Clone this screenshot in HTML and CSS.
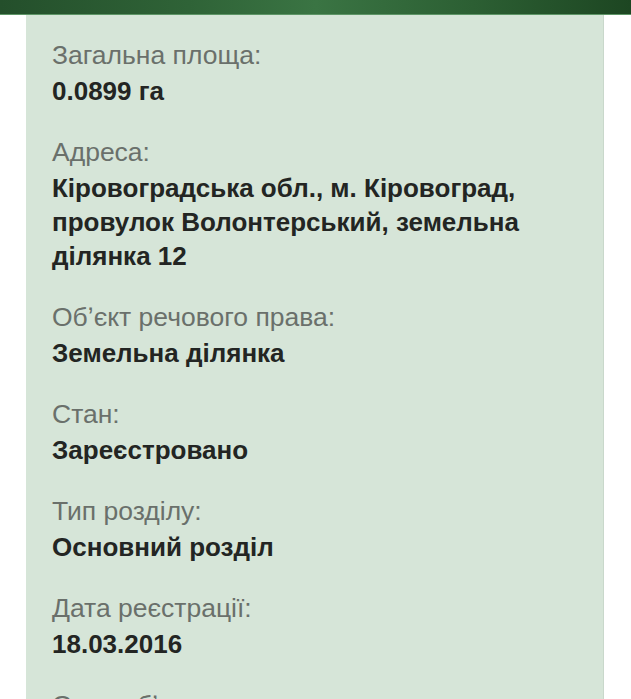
FILE: index.html
```html
<!DOCTYPE html>
<html lang="uk">
<head>
<meta charset="utf-8">
<link rel="stylesheet" href="styles.css">
</head>
<body>
<div class="topbar"></div>
<div class="card">
  <div class="field">
    <div class="label">Загальна площа:</div>
    <div class="value">0.0899 га</div>
  </div>
  <div class="field">
    <div class="label">Адреса:</div>
    <div class="value">Кіровоградська обл., м. Кіровоград, провулок Волонтерський, земельна ділянка 12</div>
  </div>
  <div class="field">
    <div class="label">Обʼєкт речового права:</div>
    <div class="value">Земельна ділянка</div>
  </div>
  <div class="field">
    <div class="label">Стан:</div>
    <div class="value">Зареєстровано</div>
  </div>
  <div class="field">
    <div class="label">Тип розділу:</div>
    <div class="value">Основний розділ</div>
  </div>
  <div class="field">
    <div class="label">Дата реєстрації:</div>
    <div class="value">18.03.2016</div>
  </div>
  <div class="field">
    <div class="label">Опис обʼєкта:</div>
  </div>
</div>
</body>
</html>
```
FILE: styles.css
```css
html, body {
  margin: 0;
  padding: 0;
  background: #ffffff;
  overflow: hidden;
}
body {
  font-family: "Liberation Sans", Arial, sans-serif;
  height: 699px;
}
.topbar {
  height: 14px;
  background: linear-gradient(90deg, #244f2b 0%, #2f6337 30%, #3a7443 50%, #2c5f33 75%, #1d4622 100%);
  border-bottom: 1px solid #5d9566;
}
.card {
  margin: 0 27px 0 26px;
  background: #d6e5d8;
  border-right: 1px solid #c9d8cb;
  padding: 25px 26px 0 26px;
  display: flex;
  flex-direction: column;
  gap: 29px;
  height: 684px;
  box-sizing: border-box;
  overflow: hidden;
}
.field {
  display: flex;
  flex-direction: column;
  gap: 3px;
}
.label {
  font-size: 26.5px;
  line-height: 31px;
  color: #6a706b;
}
.value {
  font-size: 26px;
  line-height: 34px;
  font-weight: bold;
  color: #232523;
}
```
